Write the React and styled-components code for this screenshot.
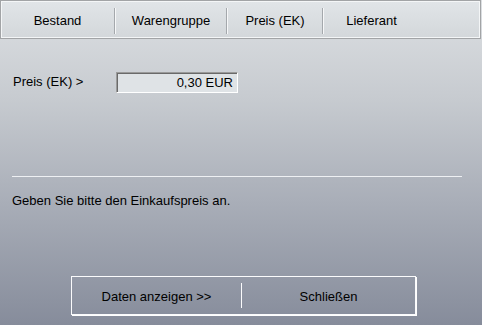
import React from "react";
import styled, { createGlobalStyle } from "styled-components";

const Global = createGlobalStyle`
  body {
    margin: 0;
    font-family: "Liberation Sans", Arial, sans-serif;
  }
`;

const Page = styled.div`
  width: 482px;
  height: 325px;
  overflow: hidden;
  background: linear-gradient(#dde0e3 0%, #c7cbd0 30%, #a9aeb8 62%, #868c9b 100%);
  font-size: 13px;
  color: #000;
  display: flex;
  flex-direction: column;
`;

const TabBar = styled.div`
  width: 479px;
  height: 37px;
  border: 1px solid #a2a4a6;
  box-shadow: inset 1px 1px 0 #f4f6f7, inset -1px -1px 0 #f4f6f7;
  background: linear-gradient(#e1e5e8, #d3d7da);
  display: flex;
  align-items: flex-start;
`;

const Tab = styled.div`
  width: ${(p) => p.w}px;
  padding-top: 12px;
  line-height: 15px;
  text-align: center;
  white-space: nowrap;
`;

const TabSep = styled.div`
  width: 1px;
  height: 26px;
  margin-top: 7px;
  margin-right: 1px;
  background: #a4a8ac;
  box-shadow: 1px 0 0 #f6f7f8;
`;

const Content = styled.div`
  padding: 0 12px;
  display: flex;
  flex-direction: column;
`;

const FieldRow = styled.div`
  display: flex;
  align-items: center;
  margin-top: 33px;
`;

const Label = styled.div`
  width: 103px;
  padding-left: 1px;
  line-height: 15px;
  margin-top: -2px;
`;

const Value = styled.div`
  width: 116px;
  height: 18px;
  border: 1px solid;
  border-color: #9a9a9a #ffffff #ffffff #9a9a9a;
  box-shadow: inset 1px 1px 0 #6a6a6a;
  background: #dfe3e6;
  padding: 1px 4px 0 0;
  line-height: 18px;
  text-align: right;
`;

const Rule = styled.div`
  width: 450px;
  height: 0;
  border-top: 1px solid #eef0f3;
  margin-top: 83px;
`;

const Hint = styled.div`
  margin-top: 16px;
  line-height: 15px;
`;

const ButtonBox = styled.div`
  margin: 68px 0 0 59px;
  width: 343px;
  height: 37px;
  border: 1px solid #fbfbfc;
  box-shadow: 1px 1px 0 #ffffff;
  display: flex;
  align-items: center;
`;

const Btn = styled.div`
  flex: ${(p) => p.w}px 0 0;
  width: ${(p) => p.w}px;
  text-align: center;
  line-height: 15px;
  padding-top: 2px;
`;

const BtnSep = styled.div`
  width: 1px;
  height: 25px;
  background: #fbfbfc;
`;

export default function App() {
  return (
    <>
      <Global />
      <Page>
        <TabBar>
          <Tab w={113}>Bestand</Tab>
          <TabSep />
          <Tab w={110}>Warengruppe</Tab>
          <TabSep />
          <Tab w={94}>Preis (EK)</Tab>
          <TabSep />
          <Tab w={95}>Lieferant</Tab>
        </TabBar>
        <Content>
          <FieldRow>
            <Label>Preis (EK) &gt;</Label>
            <Value>0,30 EUR</Value>
          </FieldRow>
          <Rule />
          <Hint>Geben Sie bitte den Einkaufspreis an.</Hint>
          <ButtonBox>
            <Btn w={169}>Daten anzeigen &gt;&gt;</Btn>
            <BtnSep />
            <Btn w={173}>Schließen</Btn>
          </ButtonBox>
        </Content>
      </Page>
    </>
  );
}
